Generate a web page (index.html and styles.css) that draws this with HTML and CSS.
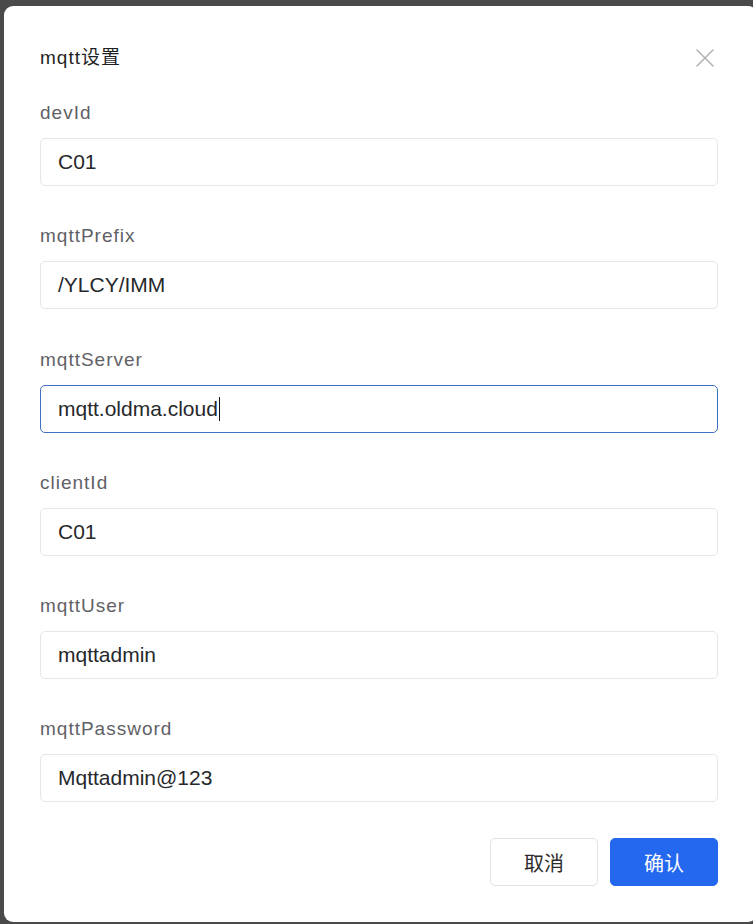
FILE: index.html
```html
<!DOCTYPE html>
<html lang="zh">
<head>
<meta charset="utf-8">
<title>mqtt设置</title>
<link rel="stylesheet" href="styles.css">
</head>
<body>
<div class="dialog">
  <div class="header">
    <div class="title">mqtt设置</div>
    <div class="close" aria-label="关闭">
      <svg width="20" height="20" viewBox="0 0 20 20"><path d="M2 2 L18 18 M18 2 L2 18" stroke="#b3b3b3" stroke-width="1.6" fill="none" stroke-linecap="round"/></svg>
    </div>
  </div>
  <div class="form">
    <div class="item">
      <div class="label">devId</div>
      <div class="input">C01</div>
    </div>
    <div class="item">
      <div class="label">mqttPrefix</div>
      <div class="input">/YLCY/IMM</div>
    </div>
    <div class="item">
      <div class="label">mqttServer</div>
      <div class="input focused">mqtt.oldma.cloud<span class="caret"></span></div>
    </div>
    <div class="item">
      <div class="label">clientId</div>
      <div class="input">C01</div>
    </div>
    <div class="item">
      <div class="label">mqttUser</div>
      <div class="input">mqttadmin</div>
    </div>
    <div class="item">
      <div class="label">mqttPassword</div>
      <div class="input">Mqttadmin@123</div>
    </div>
  </div>
  <div class="footer">
    <button class="btn cancel">取消</button>
    <button class="btn primary">确认</button>
  </div>
</div>
</body>
</html>
```
FILE: styles.css
```css
html, body {
  margin: 0;
  padding: 0;
}
body {
  background: #4a4a4a;
  width: 753px;
  height: 924px;
  overflow: hidden;
  padding: 6px 0 0 4px;
  box-sizing: border-box;
  font-family: "Liberation Sans", "Noto Sans CJK SC", sans-serif;
}
.dialog {
  background: #ffffff;
  width: 753px;
  height: 916px;
  border-radius: 9px;
  box-sizing: border-box;
  padding: 40px 35px 36px 36px;
  display: flex;
  flex-direction: column;
}
.header {
  display: flex;
  justify-content: space-between;
  align-items: center;
  height: 24px;
}
.title {
  font-size: 19px;
  letter-spacing: 1px;
  line-height: 24px;
  color: #1f1f1f;
}
.close {
  width: 20px;
  height: 20px;
  margin-right: 7px;
  display: flex;
}
.form {
  margin-top: 31px;
  display: flex;
  flex-direction: column;
  gap: 38.25px;
}
.item {
  display: flex;
  flex-direction: column;
  gap: 13px;
}
.label {
  font-size: 19px;
  letter-spacing: 1px;
  line-height: 24px;
  color: #5f6166;
}
.input {
  width: 678px;
  height: 48px;
  box-sizing: border-box;
  border: 1px solid #e6e6e6;
  border-radius: 5px;
  padding: 0 17px;
  display: flex;
  align-items: center;
  font-size: 21px;
  color: #26282b;
}
.input.focused {
  border-color: #3f71c2;
}
.caret {
  display: inline-block;
  width: 1px;
  height: 24px;
  background: #111;
  margin-left: 1px;
}
.footer {
  margin-top: 36px;
  display: flex;
  justify-content: flex-end;
  gap: 12px;
  width: 678px;
}
.btn {
  width: 108px;
  height: 48px;
  border-radius: 5px;
  font-family: "Noto Sans CJK SC", sans-serif;
  font-size: 20px;
  cursor: pointer;
  box-sizing: border-box;
}
.cancel {
  background: #fff;
  border: 1px solid #e3e3e3;
  color: #2b2b2b;
}
.primary {
  background: #2468f0;
  border: 1px solid #2468f0;
  color: #fff;
}
```
